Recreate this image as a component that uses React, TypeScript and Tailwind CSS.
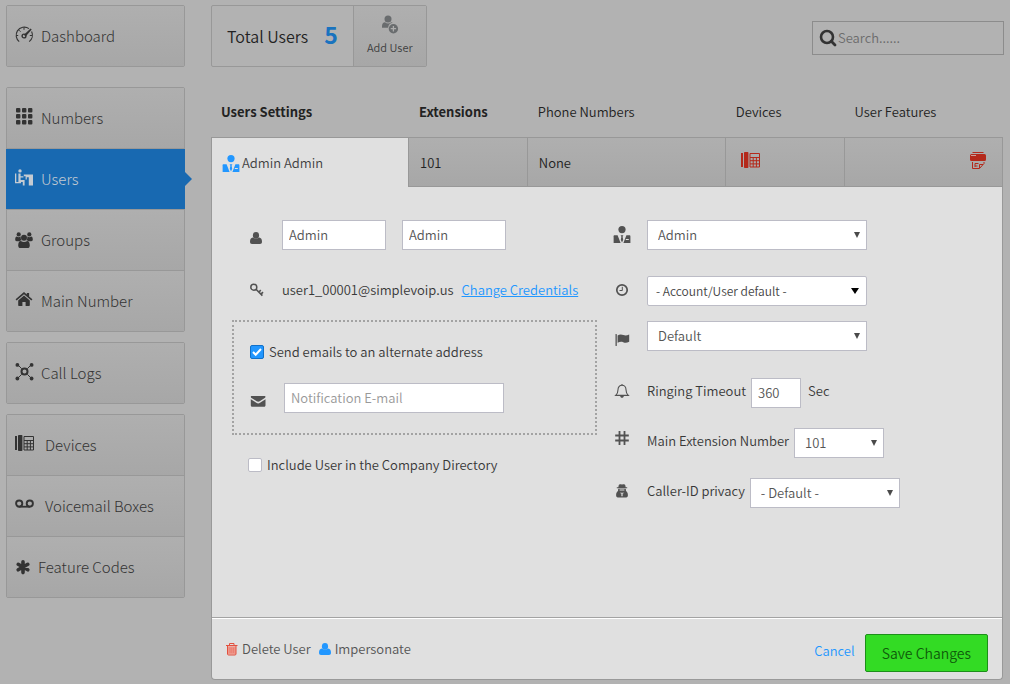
import React from "react";
import type { ReactNode } from "react";

type IconProps = { className?: string };

function Svg({ size = 20, className = "", children }: { size?: number; className?: string; children: ReactNode }) {
  return (
    <svg width={size} height={size} viewBox={`0 0 ${size} ${size}`} fill="currentColor" className={`shrink-0 ${className}`} aria-hidden="true">
      {children}
    </svg>
  );
}

const GaugeIcon = () => (
  <Svg>
    <path d="M4.2 15.6A8.2 8.2 0 0 1 2.4 4.9 8.2 8.2 0 0 1 14 2.6M16.6 5.6a8.2 8.2 0 0 1-2.4 10" fill="none" stroke="currentColor" strokeWidth="1.1" />
    <path d="M9 1.5v2.3M4 4.2l1.5 1.5M1 9.5h2.2M14.8 9.5H17" stroke="currentColor" strokeWidth="1" />
    <path d="M15.6 2.4l1.1 1-6 7-1.8-1.6z" />
    <circle cx="9" cy="10" r="1.9" fill="none" stroke="currentColor" strokeWidth="1.4" />
  </Svg>
);

const KeypadIcon = () => (
  <Svg>
    {[0, 6, 12].map((y) => [1, 7, 13].map((x) => <rect key={`${x}-${y}`} x={x} y={y} width="4.4" height="4.4" rx="1" />))}
  </Svg>
);

const DeskIcon = () => (
  <Svg>
    <circle cx="5" cy="1.9" r="1.7" />
    <path d="M0 4.500h1.300V13H6v1.300H0z" />
    <path d="M3.400 4.600h2.200V7.200h2.800v1.200H5.600V11h4v5.400H7.800v-3.400H3.400z" />
    <path d="M8.800 5.400H18v11h-4.200V8.200h-2v2.300h-1.200V7.200H8.800z" />
  </Svg>
);

const GroupIcon = () => (
  <Svg>
    <circle cx="3.7" cy="4.4" r="2.1" />
    <circle cx="14.3" cy="4.4" r="2.1" />
    <path d="M.2 9.6c0-2 .6-3 1.7-3 1.2.9 2.3.9 3.4 0l.4.2c-.2 1.4.2 2.6 1 3.4-.8 0-1.5.4-2.2 1H1.700C.8 11.200.2 10.600.2 9.600z" />
    <path d="M17.800 9.600c0-2-.6-3-1.700-3-1.200.9-2.300.9-3.400 0l-.4.2c.2 1.400-.2 2.600-1 3.400.8 0 1.500.4 2.200 1h2.800c.9 0 1.500-.6 1.500-1.600z" />
    <circle cx="9" cy="7.800" r="3" />
    <path d="M3.200 15.500c0-2.700.9-4.500 2.600-4.500 2.100 1.300 4.300 1.300 6.400 0 1.700 0 2.600 1.800 2.600 4.500 0 1.700-.9 2.600-2.300 2.600h-7c-1.400 0-2.300-.9-2.300-2.600z" />
  </Svg>
);

const HomeIcon = () => (
  <Svg>
    <path d="M9 1l2.800 2.400V1.900h2.300v3.500l3.300 2.900-1 1.100L9 3.200 1.600 9.400l-1-1.100z" />
    <path d="M9 4.500l5.800 4.900V14c0 .6-.4 1-1 1h-3.200v-4H7.400v4H4.200c-.6 0-1-.4-1-1V9.400z" />
  </Svg>
);

const NodesIcon = () => (
  <Svg>
    <circle cx="9.500" cy="8.500" r="3" fill="none" stroke="currentColor" strokeWidth="2" />
    <path d="M2.500 1.500l4.200 4.200M16.500 1.500l-4.200 4.200M2.500 15.500l4.200-4.200M16.500 15.500l-4.200-4.200" stroke="currentColor" strokeWidth="1" />
    <circle cx="2.400" cy="1.900" r="1.900" />
    <circle cx="16.600" cy="1.900" r="1.900" />
    <circle cx="2.400" cy="15.500" r="1.900" />
    <circle cx="16.600" cy="15.500" r="1.900" />
  </Svg>
);

const DeskPhoneIcon = ({ className = "" }: IconProps) => (
  <Svg className={className}>
    <rect x="0" y="1" width="2" height="14" />
    <rect x="3" y="0" width="4.400" height="16" rx=".8" />
    <path d="M9 1.500h9.500v13.500H9zM9 5.500h9.500M9 8.700h9.500M9 11.900h9.500M12.200 5.500V15M15.400 5.500V15" fill="none" stroke="currentColor" strokeWidth="1" />
  </Svg>
);

const VoicemailIcon = () => (
  <Svg>
    <circle cx="4.200" cy="7.600" r="3.100" fill="none" stroke="currentColor" strokeWidth="1.900" />
    <circle cx="14.800" cy="7.600" r="3.100" fill="none" stroke="currentColor" strokeWidth="1.900" />
    <path d="M4.200 9.800h10.600v1.800H4.200z" />
  </Svg>
);

const AsteriskIcon = () => (
  <Svg>
    <path d="M8 4.800v10.800M3.200 7.300l9.600 5.500M3.200 12.800l9.600-5.500" stroke="currentColor" strokeWidth="3.600" strokeLinecap="round" />
  </Svg>
);

const AdvisorIcon = ({ className = "" }: IconProps) => (
  <Svg size={18} className={className}>
    <circle cx="9" cy="3.600" r="3.600" />
    <path d="M1.600 9.200h3L7.600 17H.6v-6.800c0-.6.4-1 1-1z" />
    <path d="M7.600 9.200h2.800l-.8 1.600.6 3L9 16.400l-1.200-2.600.6-3z" />
    <path fillRule="evenodd" d="M13.400 9.200h3c.6 0 1 .4 1 1V17h-7zM12.800 12.900v1.100h3v-1.100z" />
  </Svg>
);

const PersonIcon = ({ className = "" }: IconProps) => (
  <Svg size={12} className={className}>
    <ellipse cx="6" cy="3.400" rx="3.100" ry="3.400" />
    <path d="M0 9.800c0-2.700.9-4.100 2.900-4.300 2 1.700 4.200 1.700 6.200 0 2 .2 2.900 1.600 2.900 4.300 0 1.400-.8 2.200-2 2.200H2c-1.200 0-2-.8-2-2.200z" />
  </Svg>
);

const AddUserIcon = () => (
  <Svg className="text-[#696c6e]">
    <circle cx="8" cy="3.900" r="3.500" />
    <path d="M2 12.800V11c0-2.300 1.300-3.700 3-3.800 2 1.700 4.200 1.700 6.200 0l1.600.6a5.600 5.600 0 0 0-4.700 5z" />
    <circle cx="13.400" cy="13.700" r="4.700" />
    <path d="M13.400 11v5.400M10.700 13.700h5.400" stroke="#adadad" strokeWidth="1.300" />
  </Svg>
);

const FaxIcon = () => (
  <Svg size={18} className="text-[#b4291b]">
    <path d="M3.500 0h11v1h-11zM2.500 2h13A1.500 1.500 0 0 1 17 3.500v4A1.500 1.500 0 0 1 15.500 9h-13A1.500 1.500 0 0 1 1 7.500v-4A1.500 1.500 0 0 1 2.500 2z" />
    <path d="M2 3.500h5" stroke="#c9a09c" strokeWidth="1" />
    <path d="M3.500 10v6.500h7l4.500-5V10M10.500 16v-3.500H14M6 11.500h3.500M6 14h2.500M6 11.500V15" fill="none" stroke="currentColor" strokeWidth="1" />
  </Svg>
);

const SearchIcon = () => (
  <Svg size={18}>
    <circle cx="8" cy="8" r="6" fill="none" stroke="currentColor" strokeWidth="2.600" />
    <path d="M12.300 12.300l3.700 3.700" stroke="currentColor" strokeWidth="2.800" strokeLinecap="round" />
  </Svg>
);

const KeyIcon = () => (
  <Svg size={16}>
    <circle cx="3.800" cy="5.200" r="3" fill="none" stroke="currentColor" strokeWidth="1.500" />
    <path d="M6 7.200l6.400 6.400M8.900 10l1.900-1.900M11 12.100l2-2" fill="none" stroke="currentColor" strokeWidth="1.600" />
  </Svg>
);

const MailIcon = () => (
  <Svg size={20}>
    <path d="M1.400 8h13.400c.4 0 .7.3.7.700 0 .6-.3 1-.8 1.300l-5 3.300c-1 .6-2 .6-3 0L1.500 10C1 9.600.8 9.200.8 8.700c0-.4.2-.7.6-.7z" />
    <path d="M.8 11.200l5.500 3.600c1.300.8 2.500.8 3.700 0l5.500-3.600v6.100c0 .9-.5 1.500-1.400 1.500H2.200c-.9 0-1.400-.6-1.400-1.500z" />
  </Svg>
);

const ClockIcon = () => (
  <Svg size={18}>
    <circle cx="9" cy="8" r="5.200" fill="none" stroke="currentColor" strokeWidth="1.700" />
    <path d="M9.300 4.800v3.700H6.500" fill="none" stroke="currentColor" strokeWidth="1" />
  </Svg>
);

const FlagIcon = () => (
  <Svg size={20}>
    <rect x="2.500" y="8" width="1.300" height="12" rx=".6" />
    <path d="M4.600 9.500c2-1.400 4-1.300 5.800-.4 1.800.8 3.400.6 5.800-.5v7.200c-2.400 1.300-4.200 1.300-6 .4-1.800-.8-3.500-.6-5.600.6z" />
  </Svg>
);

const BellIcon = () => (
  <Svg size={18}>
    <path d="M9 1.300c-2.600 0-4 1.900-4 4.400 0 3-1 4.500-2.300 5.700h12.600C14 10.200 13 8.700 13 5.700c0-2.500-1.400-4.400-4-4.400z" fill="none" stroke="currentColor" strokeWidth="1.100" />
    <path d="M8.300.3h1.400v1.200H8.300zM7.200 12h3.600c0 1.100-.8 1.800-1.800 1.800S7.200 13.100 7.200 12z" />
  </Svg>
);

const HashIcon = () => (
  <Svg size={24}>
    <path d="M6.500 0v14M11.500 0v14M2.200 4.500h13.600M2.200 9.500h13.600" stroke="currentColor" strokeWidth="1.800" />
  </Svg>
);

const PrivacyIcon = () => (
  <Svg size={18}>
    <path d="M5.800 1C6.300 0 7 .4 9 .4s2.700-.4 3.200.6l.5 2.200h1.500v1H3.800v-1h1.500z" />
    <path fillRule="evenodd" d="M5.200 4.800h7.600l.2 2.200c1.300.8 1.900 2.200 1.900 4.300 0 1.400-.6 2.100-1.700 2.100H4.800c-1.100 0-1.700-.7-1.700-2.100 0-2.100.6-3.500 1.900-4.300zM6.600 5.600v.9h4.800v-.9zM6.700 8.800l1.300.6v2.800h.6V9.600h.8v2.600h.6V9.400l1.300-.6z" />
  </Svg>
);

const TrashIcon = () => (
  <Svg size={14}>
    <path d="M2.600 4.300h8.400v8.200H2.600z" fill="#ee978b" />
    <path d="M1 3.500h11.500M4.500 3V1.500h4.500V3M2.500 3.500v8.500c0 .6.400 1 1 1h6.500c.6 0 1-.4 1-1V3.500" fill="none" stroke="#e2513f" strokeWidth="1" />
    <path d="M5 5.500v5.500M6.800 5.500v5.500M8.600 5.500v5.500" stroke="#e8695a" strokeWidth=".6" />
  </Svg>
);

type NavItem = { label: string; icon: ReactNode; slot: string; active?: boolean };

const navGroups: { margin: string; items: NavItem[] }[] = [
  { margin: "", items: [{ label: "Dashboard", icon: <GaugeIcon />, slot: "w-[26px]" }] },
  {
    margin: "mt-5",
    items: [
      { label: "Numbers", icon: <KeypadIcon />, slot: "w-[26px]" },
      { label: "Users", icon: <DeskIcon />, slot: "w-[26px]", active: true },
      { label: "Groups", icon: <GroupIcon />, slot: "w-[26px]" },
      { label: "Main Number", icon: <HomeIcon />, slot: "w-[26px]" },
    ],
  },
  { margin: "mt-[10px]", items: [{ label: "Call Logs", icon: <NodesIcon />, slot: "w-[26px]" }] },
  {
    margin: "mt-[10px]",
    items: [
      { label: "Devices", icon: <DeskPhoneIcon />, slot: "w-[30px]" },
      { label: "Voicemail Boxes", icon: <VoicemailIcon />, slot: "w-[30px]" },
      { label: "Feature Codes", icon: <AsteriskIcon />, slot: "w-[23px]" },
    ],
  },
];

function Sidebar() {
  return (
    <nav className="w-[179px] shrink-0">
      {navGroups.map((group) => (
        <ul
          key={group.items[0].label}
          className={`${group.margin} divide-y divide-[#989898] rounded-[2px] border border-[#989898]`}
        >
          {group.items.map((item) => (
            <li key={item.label}>
              <a
                href="#"
                className={
                  item.active
                    ? "relative -mx-px flex h-[60px] items-center bg-[#1869b1] pl-[9px] text-[#c4cbd2]"
                    : "flex h-[60px] items-center bg-linear-to-b from-[#afafaf] to-[#a7a7a7] pl-2 text-[#333]"
                }
              >
                <span className={`${item.slot} shrink-0`}>{item.icon}</span>
                <span className="text-[15px] leading-5 font-light">{item.label}</span>
                {item.active && (
                  <svg width="7" height="14" viewBox="0 0 7 14" className="absolute top-[23px] left-full" aria-hidden="true">
                    <path d="M0 0l7 7-7 7z" fill="#1869b1" />
                  </svg>
                )}
              </a>
            </li>
          ))}
        </ul>
      ))}
    </nav>
  );
}

function SelectBox({
  id,
  label,
  option,
  width,
  dark = false,
}: {
  id: string;
  label?: string;
  option: string;
  width: string;
  dark?: boolean;
}) {
  return (
    <div className={`grid items-center ${width}`}>
      <select
        id={id}
        aria-label={label}
        className={`col-start-1 row-start-1 h-[30px] w-full appearance-none border border-[#bcbcc6] bg-white ${
          dark ? "rounded-[2px] pl-2 text-[12px] text-[#444]" : "pl-[10px] text-[13px] text-[#555]"
        }`}
      >
        <option>{option}</option>
      </select>
      <svg
        width="8"
        height="6"
        viewBox="0 0 8 6"
        className={`pointer-events-none col-start-1 row-start-1 justify-self-end ${dark ? "mr-2 text-black" : "mr-[6px] text-[#4a4a4a]"}`}
        aria-hidden="true"
      >
        <path d={dark ? "M0 0h8L4 6z" : "M1 0h6L4 6z"} fill="currentColor" />
      </svg>
    </div>
  );
}

function Check({ id, label, checked }: { id: string; label: string; checked?: boolean }) {
  return (
    <div className="flex h-5 items-center gap-[5px]">
      <span className="grid">
        <input
          id={id}
          type="checkbox"
          defaultChecked={checked}
          className="peer col-start-1 row-start-1 size-[14px] appearance-none rounded-[2px] border border-[#bcbcc6] bg-white checked:border-[#1270c8] checked:bg-[#2297ff]"
        />
        <svg
          width="14"
          height="14"
          viewBox="0 0 14 14"
          className="pointer-events-none col-start-1 row-start-1 hidden peer-checked:block"
          aria-hidden="true"
        >
          <path d="M3 7l2.700 2.700L11 4" fill="none" stroke="#fff" strokeWidth="2" />
        </svg>
      </span>
      <label htmlFor={id}>{label}</label>
    </div>
  );
}

const inputClass = "h-[30px] border border-[#bcbcc6] bg-white px-[6px] pb-[2px] text-[13px] text-[#555] placeholder:text-[#999]";

function FormRow({ icon, margin = "", children }: { icon: ReactNode; margin?: string; children: ReactNode }) {
  return (
    <div className={`flex items-center ${margin}`}>
      <span className="w-[34px] shrink-0 text-[#525252]">{icon}</span>
      {children}
    </div>
  );
}

function UserForm() {
  return (
    <div className="grid flex-1 grid-cols-[365fr_376fr] items-start gap-x-4 pt-[33px] pr-[13px] pb-8 pl-5 text-[#383838]">
      <div>
        <div className="flex items-center pl-[18px]">
          <span className="w-8 shrink-0 pt-[5px] text-[#525252]">
            <PersonIcon />
          </span>
          <input aria-label="First name" defaultValue="Admin" className={`${inputClass} w-[104px]`} />
          <input aria-label="Last name" defaultValue="Admin" className={`${inputClass} ml-4 w-[104px]`} />
        </div>
        <div className="mt-[30px] flex h-5 items-center pl-[18px]">
          <span className="w-8 shrink-0 text-[#525252]">
            <KeyIcon />
          </span>
          <span>user1_00001@simplevoip.us</span>
          <a href="#" className="ml-2 text-[#2297ff] underline">
            Change Credentials
          </a>
        </div>
        <div className="mt-5 border-2 border-dotted border-[#a3a3a3] pt-5 pb-5 pl-4">
          <Check id="alternate" label="Send emails to an alternate address" checked />
          <FormRow margin="mt-[21px]" icon={<MailIcon />}>
            <input type="email" aria-label="Notification E-mail" placeholder="Notification E-mail" className={`${inputClass} w-[220px]`} />
          </FormRow>
        </div>
        <div className="mt-5 pl-4">
          <Check id="directory" label="Include User in the Company Directory" />
        </div>
      </div>

      <div>
        <FormRow icon={<AdvisorIcon />}>
          <SelectBox id="role" label="Role" option="Admin" width="w-[220px]" />
        </FormRow>
        <FormRow margin="mt-[26px]" icon={<ClockIcon />}>
          <SelectBox id="timezone" label="Time zone" option="- Account/User default -" width="w-[220px]" dark />
        </FormRow>
        <FormRow margin="mt-[15px]" icon={<FlagIcon />}>
          <SelectBox id="language" label="Language" option="Default" width="w-[220px]" />
        </FormRow>
        <FormRow margin="mt-[27px]" icon={<BellIcon />}>
          <label htmlFor="timeout" className="pr-[5px] pb-1">
            Ringing Timeout
          </label>
          <input id="timeout" defaultValue="360" className={`${inputClass} w-[50px]`} />
          <span className="pb-1 pl-[7px]">Sec</span>
        </FormRow>
        <FormRow margin="mt-5" icon={<HashIcon />}>
          <label htmlFor="extension" className="pr-[5px] pb-1">
            Main Extension Number
          </label>
          <SelectBox id="extension" option="101" width="w-[90px]" />
        </FormRow>
        <FormRow margin="mt-5" icon={<PrivacyIcon />}>
          <label htmlFor="privacy" className="pr-[5px] pb-1">
            Caller-ID privacy
          </label>
          <SelectBox id="privacy" option="- Default -" width="w-[150px]" />
        </FormRow>
      </div>
    </div>
  );
}

const cellClass =
  "h-[50px] border-y border-r border-[#989898] bg-linear-to-b from-[#afafaf] to-[#a7a7a7] px-[11px] text-left font-[350] text-[#222]";

export default function App() {
  return (
    <div className="flex min-h-screen gap-[26px] bg-[#b2b2b2] pt-[5px] pr-[7px] pb-1 pl-[6px] font-['Noto_Sans_CJK_SC',sans-serif] text-[13px] leading-5 font-[350]">
      <Sidebar />
      <main className="flex min-w-0 flex-1 flex-col">
        <header className="-mr-px flex items-start justify-between">
          <div className="flex h-[62px] rounded-[2px] border border-[#989898]">
            <div className="flex items-center pr-[15px] pl-[15px] text-[#222]">
              <h1 className="text-[16px] leading-6">Total Users</h1>
              <span className="ml-4 pb-1 text-[23px] leading-8 font-bold text-[#1973bf]">5</span>
            </div>
            <button
              type="button"
              className="flex w-[73px] flex-col items-center border-l border-[#989898] bg-linear-to-b from-[#afafaf] to-[#a7a7a7] pt-[9px] text-[#404040]"
            >
              <AddUserIcon />
              <span className="mt-[2px] text-[11px] leading-5">Add User</span>
            </button>
          </div>
          <label className="mt-4 flex h-[34px] w-[192px] items-center border border-[#8c8c8c] pl-[6px] text-[#333]">
            <SearchIcon />
            <input
              type="search"
              aria-label="Search"
              placeholder="Search......"
              className="ml-px min-w-0 flex-1 bg-transparent text-[13px] placeholder:text-[#6c6c6c]"
            />
          </label>
        </header>

        <table className="mt-5 w-full table-fixed border-separate border-spacing-0 text-left">
          <thead>
            <tr className="h-[50px] text-[#222]">
              <th className="w-[25%] pl-[10px] font-bold">Users Settings</th>
              <th className="w-[15%] pl-[10px] font-bold">Extensions</th>
              <th className="w-[25%] pl-[10px] font-[350]">Phone Numbers</th>
              <th className="w-[15%] pl-[10px] font-[350]">Devices</th>
              <th className="w-[20%] pl-[10px] font-[350]">User Features</th>
            </tr>
          </thead>
          <tbody>
            <tr>
              <td className="border-t border-r border-l border-[#989898] bg-[#e0e0e0] pb-1 pl-[10px] text-[#404040]">
                <span className="flex items-end gap-[2px]">
                  <AdvisorIcon className="text-[#2297ff]" />
                  <span className="pt-1">Admin Admin</span>
                </span>
              </td>
              <td className={`${cellClass} pt-[2px]`}>101</td>
              <td className={`${cellClass} pt-[2px]`}>None</td>
              <td className={cellClass}>
                <DeskPhoneIcon className="ml-1 text-[#b4291b]" />
              </td>
              <td className={cellClass}>
                <span className="flex justify-end pr-1 pb-[2px]">
                  <FaxIcon />
                </span>
              </td>
            </tr>
          </tbody>
        </table>

        <section className="flex flex-1 flex-col rounded-b-[4px] border-x border-b border-[#999] bg-[#e0e0e0]">
          <UserForm />
          <footer className="border-t border-[#a3a3a3]">
            <div className="flex items-start justify-between border-t border-white pt-[15px] pr-[14px] pb-[7px] pl-[13px]">
              <div className="flex h-[30px] items-center text-[#555]">
                <button type="button" className="flex items-center gap-[3px]">
                  <TrashIcon />
                  Delete User
                </button>
                <button type="button" className="ml-2 flex items-center gap-[4px]">
                  <PersonIcon className="text-[#2297ff]" />
                  Impersonate
                </button>
              </div>
              <div className="flex items-start gap-[10px]">
                <button type="button" className="h-[34px] text-[#2297ff]">
                  Cancel
                </button>
                <button
                  type="button"
                  className="h-[38px] rounded-[2px] border border-[#1d8f1a] bg-[#33db24] px-4 text-[14px] text-[#0f5c0b]"
                >
                  Save Changes
                </button>
              </div>
            </div>
          </footer>
        </section>
      </main>
    </div>
  );
}
